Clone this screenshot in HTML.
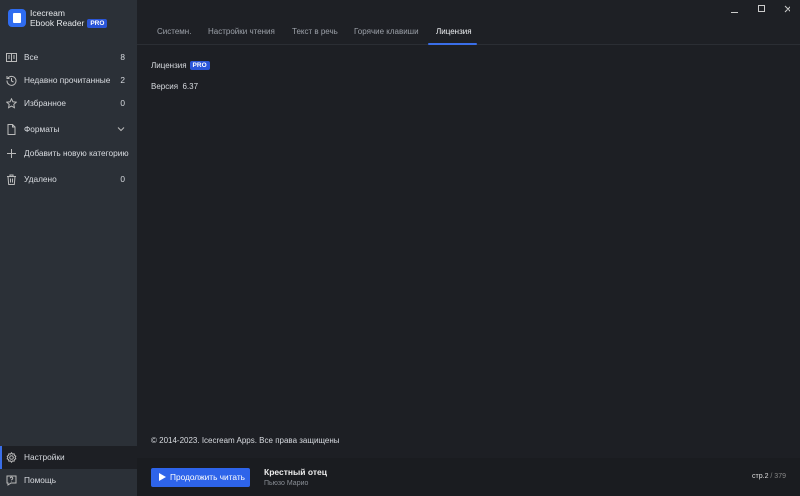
<!DOCTYPE html>
<html><head><meta charset="utf-8"><style>
*{margin:0;padding:0;box-sizing:border-box}
html,body{width:800px;height:496px;overflow:hidden}
body{background:#1d1f24;font-family:"Liberation Sans",sans-serif;color:#d8dbe0;font-size:8px;position:relative;white-space:nowrap}
.side{position:absolute;left:0;top:0;width:137px;height:496px;background:#2b3037}
.logo{position:absolute;left:8px;top:9px;width:18px;height:18px;background:#2f6cf0;border-radius:4px}
.logo i{position:absolute;left:5px;top:4px;width:8px;height:10px;background:#fff;border-radius:1px}
.t1{position:absolute;left:30px;top:8px;font-size:8.5px;color:#e6e8eb}
.t2{position:absolute;left:30px;top:18px;font-size:8.5px;color:#e6e8eb}
.pro{display:inline-block;background:#2a55d8;color:#fff;font-size:6.5px;font-weight:bold;padding:1px 3px;border-radius:2px;vertical-align:1px;margin-left:3px}
.it{position:absolute;left:0;width:137px;height:23px;line-height:23px;padding-left:24px;font-size:8.3px;color:#d8dbe0}
.it .n{position:absolute;right:12px;top:0}
.it svg{position:absolute;left:6px;top:6px}
.sel{background:#1d1f24;border-left:2px solid #3a6ee8}
.tabs{position:absolute;left:137px;top:0;right:0;height:45px;background:#1e2025;border-bottom:1px solid #2b2e34}
.tab{position:absolute;top:27px;font-size:8px;color:#9ca1a9}
.tab.a{color:#f0f2f5}
.ul{position:absolute;left:428px;top:43px;width:49px;height:2px;background:#3a6ee8;border-radius:1px}
.bot{position:absolute;left:137px;top:458px;right:0;bottom:0;background:#1a1c20}
.btn{position:absolute;left:151px;top:468px;width:99px;height:19px;background:#2e64ea;border-radius:2px;color:#fff;font-size:8.3px;line-height:19px;padding-left:19px}
.btn:before{content:"";position:absolute;left:8px;top:5px;border-left:7px solid #fff;border-top:4.5px solid transparent;border-bottom:4.5px solid transparent}
</style></head><body>
<div class="side">
<div class="logo"><i></i></div>
<div class="t1">Icecream</div>
<div class="t2">Ebook Reader<span class="pro">PRO</span></div>
<div class="it" style="top:46px"><svg width="11" height="11" viewBox="0 0 11 11" fill="none" stroke="#bbb" stroke-width="1"><rect x="0.5" y="1.5" width="10" height="8"/><path d="M5.5 1.5v8M2 4h2M2 6h2M7 4h2M7 6h2"/></svg>Все<span class="n">8</span></div>
<div class="it" style="top:69px"><svg width="11" height="11" viewBox="0 0 11 11" fill="none" stroke="#bbb" stroke-width="1"><path d="M2 3A4.5 4.5 0 1 1 1 5.5M1 1v2.5h2.5M5.5 3v3l2 1"/></svg>Недавно прочитанные<span class="n">2</span></div>
<div class="it" style="top:92px"><svg width="11" height="11" viewBox="0 0 11 11" fill="none" stroke="#bbb" stroke-width="1"><path d="M5.5 .8l1.4 3 3.3.4-2.4 2.2.6 3.3-2.9-1.6-2.9 1.6.6-3.3L.8 4.2l3.3-.4z"/></svg>Избранное<span class="n">0</span></div>
<div class="it" style="top:118px"><svg width="11" height="11" viewBox="0 0 11 11" fill="none" stroke="#bbb" stroke-width="1"><path d="M2 .5h4.5l2.5 2.5v7.5H2zM6.5.5V3H9"/></svg>Форматы<span class="n"><svg style="position:static" width="8" height="6" viewBox="0 0 8 6" fill="none" stroke="#bbb"><path d="M1 1.5l3 3 3-3"/></svg></span></div>
<div class="it" style="top:142px"><svg width="11" height="11" viewBox="0 0 11 11" fill="none" stroke="#bbb" stroke-width="1"><path d="M5.5 1v9M1 5.5h9"/></svg>Добавить новую категорию</div>
<div class="it" style="top:168px"><svg width="11" height="11" viewBox="0 0 11 11" fill="none" stroke="#bbb" stroke-width="1"><path d="M1 2.5h9M4 2.5V1h3v1.5M2 2.5l.7 8h5.6l.7-8M4.5 4.5v4M6.5 4.5v4"/></svg>Удалено<span class="n">0</span></div>
<div class="it sel" style="top:446px;padding-left:22px"><svg style="left:4px" width="11" height="11" viewBox="0 0 11 11" fill="none" stroke="#bbb" stroke-width="1"><circle cx="5.5" cy="5.5" r="1.8"/><path d="M5.5.8l1 1.3 1.6-.3.3 1.6 1.4.8-.7 1.3.7 1.3-1.4.8-.3 1.6-1.6-.3-1 1.3-1-1.3-1.6.3-.3-1.6-1.4-.8.7-1.3-.7-1.3 1.4-.8.3-1.6 1.6.3z"/></svg>Настройки</div>
<div class="it" style="top:469px"><svg width="11" height="11" viewBox="0 0 11 11" fill="none" stroke="#bbb" stroke-width="1"><path d="M1 1h9v7H5l-3 2V8H1z"/><path d="M4.3 3.3a1.2 1.2 0 1 1 1.7 1.1c-.4.2-.5.5-.5.9M5.5 6.4v.3"/></svg>Помощь</div>
</div>
<div class="tabs">
<span class="tab" style="left:20px">Системн.</span>
<span class="tab" style="left:71px">Настройки чтения</span>
<span class="tab" style="left:155px">Текст в речь</span>
<span class="tab" style="left:217px">Горячие клавиши</span>
<span class="tab a" style="left:299px">Лицензия</span>
<svg style="position:absolute;left:583px;top:4px" width="70" height="12" fill="none" stroke="#ccc" stroke-width="1"><path d="M11 8.5h7M38.5 1.5h6v6h-6zM65 2l6 6M71 2l-6 6"/></svg>
</div>
<div class="ul"></div>
<div style="position:absolute;left:151px;top:61px">Лицензия<span class="pro">PRO</span></div>
<div style="position:absolute;left:151px;top:82px">Версия&nbsp; 6.37</div>
<div style="position:absolute;left:151px;top:436px">© 2014-2023. Icecream Apps. Все права защищены</div>
<div class="bot"></div>
<div class="btn">Продолжить читать</div>
<div style="position:absolute;left:264px;top:467px;font-weight:bold;color:#eee;font-size:8.5px">Крестный отец</div>
<div style="position:absolute;left:264px;top:480px;font-size:7px;color:#8a8f96">Пьюзо Марио</div>
<div style="position:absolute;right:14px;top:473px;font-size:7px;color:#ddd">стр.2 <span style="color:#888">/ 379</span></div>
</body></html>
